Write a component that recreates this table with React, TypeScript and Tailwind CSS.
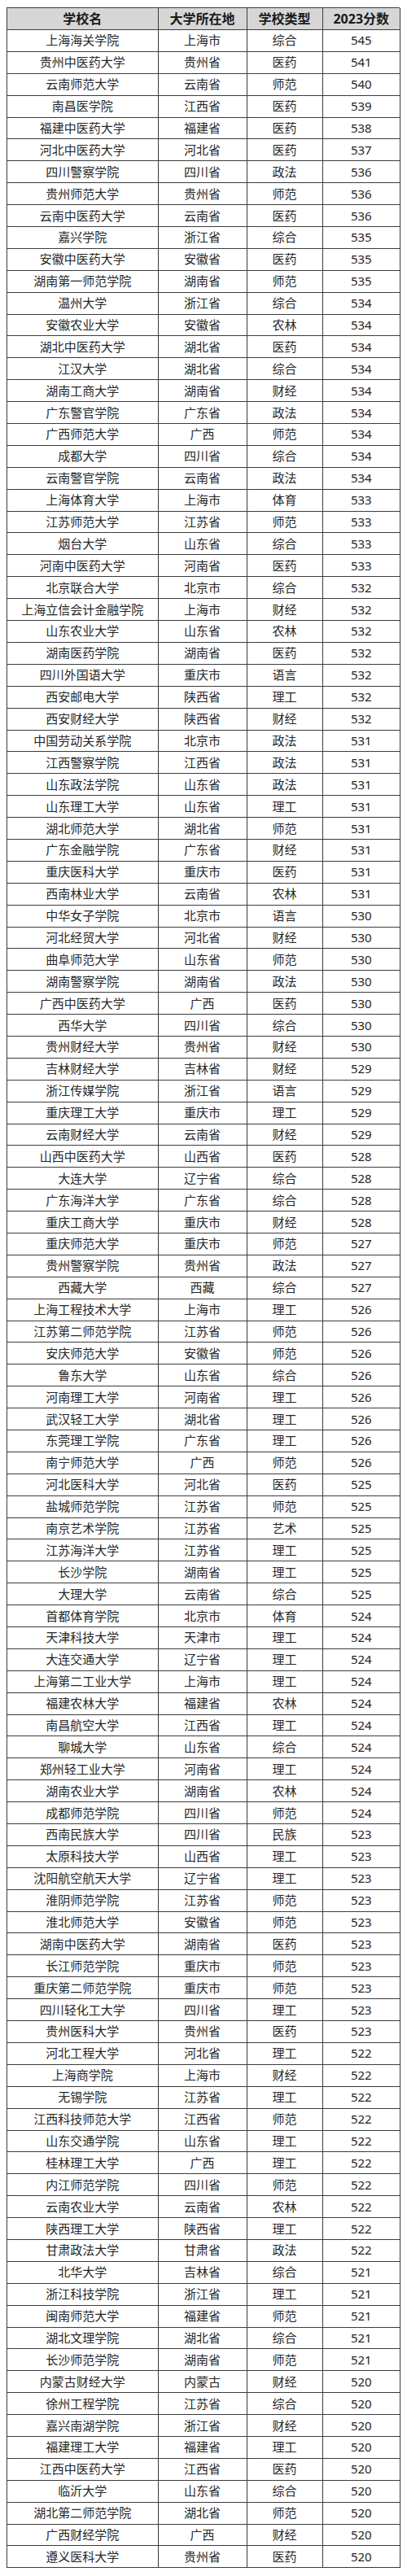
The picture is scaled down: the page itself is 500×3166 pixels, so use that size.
import React from "react";

const raw = `上海海关学院|上海市|综合|545
贵州中医药大学|贵州省|医药|541
云南师范大学|云南省|师范|540
南昌医学院|江西省|医药|539
福建中医药大学|福建省|医药|538
河北中医药大学|河北省|医药|537
四川警察学院|四川省|政法|536
贵州师范大学|贵州省|师范|536
云南中医药大学|云南省|医药|536
嘉兴学院|浙江省|综合|535
安徽中医药大学|安徽省|医药|535
湖南第一师范学院|湖南省|师范|535
温州大学|浙江省|综合|534
安徽农业大学|安徽省|农林|534
湖北中医药大学|湖北省|医药|534
江汉大学|湖北省|综合|534
湖南工商大学|湖南省|财经|534
广东警官学院|广东省|政法|534
广西师范大学|广西|师范|534
成都大学|四川省|综合|534
云南警官学院|云南省|政法|534
上海体育大学|上海市|体育|533
江苏师范大学|江苏省|师范|533
烟台大学|山东省|综合|533
河南中医药大学|河南省|医药|533
北京联合大学|北京市|综合|532
上海立信会计金融学院|上海市|财经|532
山东农业大学|山东省|农林|532
湖南医药学院|湖南省|医药|532
四川外国语大学|重庆市|语言|532
西安邮电大学|陕西省|理工|532
西安财经大学|陕西省|财经|532
中国劳动关系学院|北京市|政法|531
江西警察学院|江西省|政法|531
山东政法学院|山东省|政法|531
山东理工大学|山东省|理工|531
湖北师范大学|湖北省|师范|531
广东金融学院|广东省|财经|531
重庆医科大学|重庆市|医药|531
西南林业大学|云南省|农林|531
中华女子学院|北京市|语言|530
河北经贸大学|河北省|财经|530
曲阜师范大学|山东省|师范|530
湖南警察学院|湖南省|政法|530
广西中医药大学|广西|医药|530
西华大学|四川省|综合|530
贵州财经大学|贵州省|财经|530
吉林财经大学|吉林省|财经|529
浙江传媒学院|浙江省|语言|529
重庆理工大学|重庆市|理工|529
云南财经大学|云南省|财经|529
山西中医药大学|山西省|医药|528
大连大学|辽宁省|综合|528
广东海洋大学|广东省|综合|528
重庆工商大学|重庆市|财经|528
重庆师范大学|重庆市|师范|527
贵州警察学院|贵州省|政法|527
西藏大学|西藏|综合|527
上海工程技术大学|上海市|理工|526
江苏第二师范学院|江苏省|师范|526
安庆师范大学|安徽省|师范|526
鲁东大学|山东省|综合|526
河南理工大学|河南省|理工|526
武汉轻工大学|湖北省|理工|526
东莞理工学院|广东省|理工|526
南宁师范大学|广西|师范|526
河北医科大学|河北省|医药|525
盐城师范学院|江苏省|师范|525
南京艺术学院|江苏省|艺术|525
江苏海洋大学|江苏省|理工|525
长沙学院|湖南省|理工|525
大理大学|云南省|综合|525
首都体育学院|北京市|体育|524
天津科技大学|天津市|理工|524
大连交通大学|辽宁省|理工|524
上海第二工业大学|上海市|理工|524
福建农林大学|福建省|农林|524
南昌航空大学|江西省|理工|524
聊城大学|山东省|综合|524
郑州轻工业大学|河南省|理工|524
湖南农业大学|湖南省|农林|524
成都师范学院|四川省|师范|524
西南民族大学|四川省|民族|523
太原科技大学|山西省|理工|523
沈阳航空航天大学|辽宁省|理工|523
淮阴师范学院|江苏省|师范|523
淮北师范大学|安徽省|师范|523
湖南中医药大学|湖南省|医药|523
长江师范学院|重庆市|师范|523
重庆第二师范学院|重庆市|师范|523
四川轻化工大学|四川省|理工|523
贵州医科大学|贵州省|医药|523
河北工程大学|河北省|理工|522
上海商学院|上海市|财经|522
无锡学院|江苏省|理工|522
江西科技师范大学|江西省|师范|522
山东交通学院|山东省|理工|522
桂林理工大学|广西|理工|522
内江师范学院|四川省|师范|522
云南农业大学|云南省|农林|522
陕西理工大学|陕西省|理工|522
甘肃政法大学|甘肃省|政法|522
北华大学|吉林省|综合|521
浙江科技学院|浙江省|理工|521
闽南师范大学|福建省|师范|521
湖北文理学院|湖北省|综合|521
长沙师范学院|湖南省|师范|521
内蒙古财经大学|内蒙古|财经|520
徐州工程学院|江苏省|综合|520
嘉兴南湖学院|浙江省|财经|520
福建理工大学|福建省|理工|520
江西中医药大学|江西省|医药|520
临沂大学|山东省|综合|520
湖北第二师范学院|湖北省|师范|520
广西财经学院|广西|财经|520
遵义医科大学|贵州省|医药|520`;

const rows = raw.split("\n").map((l) => l.split("|"));

const cell =
  "flex items-center justify-center border-r border-b border-[#3c3c3c] h-[26.9px] leading-none";

export default function App() {
  return (
    <div
      className="w-[500px] min-h-[3166px] bg-white pt-[9px] pl-[8px] text-[#262626]"
      style={{ fontFamily: '"Noto Sans", "Noto Sans CJK SC", sans-serif' }}
    >
      <div className="grid w-[483px] grid-cols-[185.5px_109px_93px_95.5px] border-l border-t border-[#3c3c3c]">
        <div className={`${cell} bg-[#d6d6d6] text-[16px] font-bold h-[27px] text-[#1a1a1a]`}>学校名</div>
        <div className={`${cell} bg-[#d6d6d6] text-[16px] font-bold h-[27px] text-[#1a1a1a]`}>大学所在地</div>
        <div className={`${cell} bg-[#d6d6d6] text-[16px] font-bold h-[27px] text-[#1a1a1a]`}>学校类型</div>
        <div className={`${cell} bg-[#d6d6d6] text-[16px] font-bold h-[27px] text-[#1a1a1a]`}>2023分数</div>
        {rows.map((r, i) => (
          <React.Fragment key={i}>
            <div className={`${cell} text-[15px]`}>{r[0]}</div>
            <div className={`${cell} text-[15px]`}>{r[1]}</div>
            <div className={`${cell} text-[15px]`}>{r[2]}</div>
            <div className={`${cell} text-[15px]`}>{r[3]}</div>
          </React.Fragment>
        ))}
      </div>
    </div>
  );
}
